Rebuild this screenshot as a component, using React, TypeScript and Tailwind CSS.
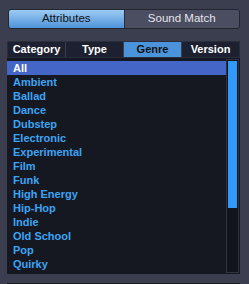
const GENRES = [
  "All",
  "Ambient",
  "Ballad",
  "Dance",
  "Dubstep",
  "Electronic",
  "Experimental",
  "Film",
  "Funk",
  "High Energy",
  "Hip-Hop",
  "Indie",
  "Old School",
  "Pop",
  "Quirky",
];

const TABS = ["Category", "Type", "Genre", "Version"];

export default function App() {
  return (
    <div
      className="h-[284px] w-[249px] overflow-hidden bg-[#3b3e4f] pt-[9px]"
      style={{ fontFamily: '"Liberation Sans", Arial, sans-serif' }}
    >
      {/* Segmented switch */}
      <div className="ml-[8px] flex h-[20px] w-[232px] overflow-hidden rounded-[3px] border border-[#23252f] text-[11.5px]">
        <div className="flex flex-1 items-center justify-center bg-gradient-to-b from-[#9ccbf2] to-[#4f93da] text-[#111]">
          Attributes
        </div>
        <div className="flex flex-1 items-center justify-center border-l border-[#2a2c38] bg-[#4b4e61] text-[#e4e4ea]">
          Sound Match
        </div>
      </div>

      {/* Tabs */}
      <div className="ml-[7px] mt-[12px] flex h-[17px] w-[233px] border border-[#2a2d3a] bg-[#1d2030] text-[11px] font-bold">
        {TABS.map((t, i) => (
          <div
            key={t}
            className={`flex flex-1 items-center justify-center ${i > 0 ? "border-l border-[#3a3d4d]" : ""} ${
              t === "Genre" ? "bg-[#4b94dc] text-[#111]" : "text-white"
            }`}
          >
            {t}
          </div>
        ))}
      </div>

      {/* List */}
      <div className="ml-[7px] flex h-[216px] w-[233px] bg-[#151821] pb-[1px]">
        <div className="flex-1 pt-[3px]">
          {GENRES.map((g) => (
            <div
              key={g}
              className={`flex h-[14px] items-center pl-[6px] text-[11px] font-bold ${
                g === "All" ? "bg-[#4466c6] text-white" : "text-[#3ca4f4]"
              }`}
            >
              {g}
            </div>
          ))}
        </div>
        <div className="mr-[1px] mt-[1px] w-[13px] border border-[#2f3240] bg-[#12141b] p-[1px]">
          <div className="h-[147px] bg-[#3399f8]" />
        </div>
      </div>

      {/* next panel edge */}
      <div className="ml-[7px] mt-[9px] h-[2px] w-[233px] bg-[#181a22]" />
    </div>
  );
}
